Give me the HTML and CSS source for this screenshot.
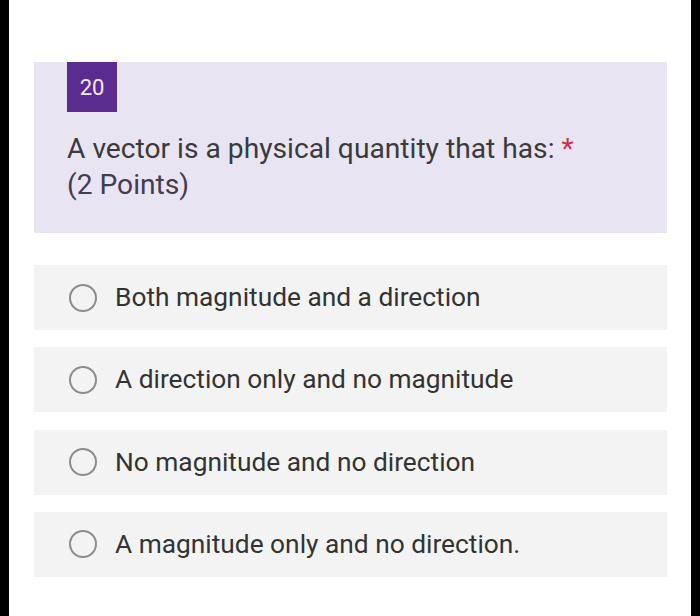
FILE: index.html
```html
<!DOCTYPE html>
<html>
<head>
<meta charset="utf-8">
<link rel="stylesheet" href="styles.css">
</head>
<body>
<div class="frame">
  <div class="page">
    <div class="question">
      <div class="badge">20</div>
      <div class="qtext">A vector is a physical quantity that has: <span class="req">*</span><br><span class="points">(2 Points)</span></div>
    </div>
    <div class="options">
      <div class="option"><span class="radio"></span><span class="label">Both magnitude and a direction</span></div>
      <div class="option"><span class="radio"></span><span class="label">A direction only and no magnitude</span></div>
      <div class="option"><span class="radio"></span><span class="label">No magnitude and no direction</span></div>
      <div class="option"><span class="radio"></span><span class="label">A magnitude only and no direction.</span></div>
    </div>
  </div>
</div>
</body>
</html>
```
FILE: styles.css
```css
html, body {
  margin: 0;
  padding: 0;
  width: 700px;
  height: 616px;
  overflow: hidden;
  background: #000;
}
.frame {
  margin: 0 9px 0 9px;
  height: 616px;
  background: #fff;
  font-family: Roboto, "Liberation Sans", sans-serif;
}
.page {
  padding: 62px 24px 0 25px;
}
.question {
  background: #e8e4f1;
  height: 171px;
  padding-left: 33px;
  box-sizing: border-box;
}
.badge {
  width: 50px;
  height: 50px;
  background: #5b2c8f;
  color: #f1e6fb;
  font-size: 22px;
  display: flex;
  align-items: center;
  justify-content: center;
}
.qtext {
  margin-top: 19px;
  font-size: 28.2px;
  line-height: 36px;
  color: #3a3a3c;
}
.req {
  color: #c4314b;
}
.points {
  color: #463a52;
}
.options {
  margin-top: 32px;
  display: flex;
  flex-direction: column;
  gap: 17.33px;
}
.option {
  background: #f3f3f3;
  height: 65px;
  display: flex;
  align-items: center;
  padding-left: 35px;
}
.radio {
  width: 24px;
  height: 24px;
  border: 2px solid #8c8c8c;
  border-radius: 50%;
  flex: none;
}
.label {
  margin-left: 18px;
  margin-top: -1px;
  font-size: 26.3px;
  color: #333;
}
```
